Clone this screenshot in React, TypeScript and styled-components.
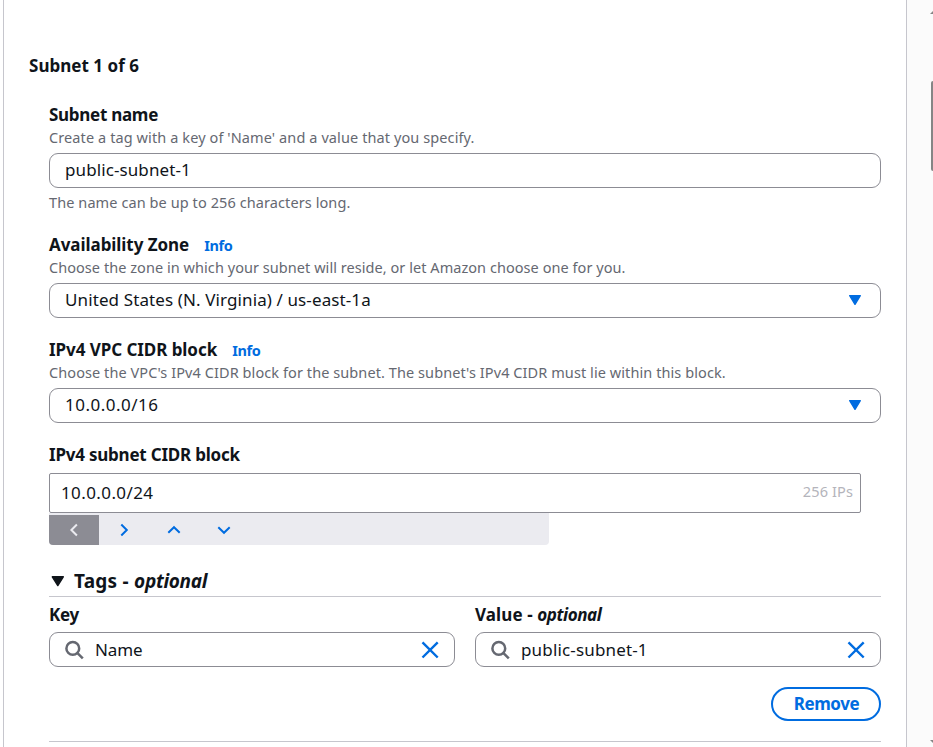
import React from "react";
import styled, { createGlobalStyle } from "styled-components";

const blue = "#006ce0";
const ink = "#0f141a";
const line = "#8c8c94";
const divider = "#c6c6cd";

const GlobalStyle = createGlobalStyle`
  * { box-sizing: border-box; }
  body {
    margin: 0;
    overflow: hidden;
    background: #fff;
    color: ${ink};
    font-family: "Noto Sans", "Open Sans", sans-serif;
  }
`;

const Page = styled.div`
  display: flex;
  height: 747px;
  padding-left: 3px;
  overflow: hidden;
`;

const Panel = styled.main`
  width: 904px;
  border: solid ${divider};
  border-width: 0 1px;
  padding: 55px 25px 0;
`;

const Rail = styled.aside`
  flex: 1;
  display: flex;
  flex-direction: column;
  align-items: flex-end;
  background: #fbfbfb;
`;

const ScrollArrow = styled.svg`
  display: block;
  width: 3px;
  height: 3px;
  margin-top: 11px;
`;

const ScrollArrowDown = styled(ScrollArrow)`
  margin-top: auto;
  margin-bottom: 4px;
`;

const ScrollThumb = styled.div`
  width: 2px;
  height: 90px;
  margin-top: 67px;
  border-radius: 2px 0 0 2px;
  background: #858585;
`;

const Text = styled.span<{ $track?: number }>`
  letter-spacing: ${(p) => p.$track ?? 0}px;
  white-space: nowrap;
`;

const Title = styled.h2`
  margin: 0;
  font-size: 17px;
  font-weight: 700;
  line-height: 22px;
`;

const Form = styled.div`
  margin: 27px 0 0 20px;
  width: 832px;
`;

const Field = styled.section`
  margin-bottom: 21px;
`;

const LabelRow = styled.div`
  display: flex;
  align-items: baseline;
  gap: 15px;
  height: 22px;
  font-size: 17px;
  font-weight: 700;
  line-height: 22px;
`;

const Optional = styled.em<{ $track: number }>`
  letter-spacing: ${(p) => p.$track}px;
`;

const Info = styled.a`
  color: ${blue};
  font-size: 14.5px;
  letter-spacing: -0.35px;
`;

const Description = styled.p`
  margin: 0;
  height: 27px;
  color: #656871;
  font-size: 14.5px;
  line-height: 22px;
`;

const Hint = styled.p`
  margin: 4px 0 0;
  padding-bottom: 1px;
  color: #656871;
  font-size: 14.5px;
  line-height: 20px;
`;

const Control = styled.div`
  display: flex;
  align-items: center;
  height: 35px;
  padding: 0 15px;
  border: 1px solid ${line};
  border-radius: 9px;
  font-size: 17px;
`;

const ControlText = styled(Text)`
  flex: 1;
  line-height: 31px;
  padding-bottom: 2px;
`;

const SearchText = styled(Text)`
  flex: 1;
  line-height: 33px;
`;

const CaretIcon = styled.svg`
  width: 20px;
  height: 20px;
  margin-bottom: 1px;
`;

const CidrInput = styled.div`
  display: flex;
  align-items: center;
  justify-content: space-between;
  width: 812px;
  height: 40px;
  margin-top: 7px;
  padding: 0 7px 2px 11px;
  border: 1px solid ${line};
  border-radius: 2px;
  font-size: 17px;
`;

const IpCount = styled.span`
  padding-bottom: 3px;
  color: #b4b4bb;
  font-size: 14.5px;
  letter-spacing: 0.12px;
`;

const Stepper = styled.div`
  display: flex;
  width: 500px;
  height: 30px;
  margin-top: 2px;
  border-radius: 0 0 4px 4px;
  background: #ebebf0;
  box-shadow: 0 -2px 0 #ebebf0;
  overflow: hidden;
`;

const StepButton = styled.button<{ $disabled?: boolean }>`
  display: flex;
  align-items: center;
  justify-content: center;
  width: 50px;
  height: 30px;
  padding: 0;
  border: 0;
  background: ${(p) => (p.$disabled ? line : "transparent")};
  color: ${(p) => (p.$disabled ? "#ebebf0" : blue)};
`;

const TagsHeader = styled.div`
  display: flex;
  align-items: center;
  height: 32px;
  margin-top: 20px;
  border-bottom: 1px solid ${divider};
  font-size: 19px;
  font-weight: 700;
  line-height: 30px;
`;

const TagsCaret = styled.svg`
  width: 14px;
  height: 12px;
  margin: 0 9px 0 2px;
`;

const TagGrid = styled.div`
  display: grid;
  grid-template-columns: 1fr 1fr;
  gap: 20px;
  margin-top: 6px;
`;

const TagLabel = styled.div`
  height: 29px;
  font-size: 17px;
  font-weight: 700;
  line-height: 23px;
`;

const SearchGlyph = styled.svg`
  width: 20px;
  height: 20px;
  margin-right: 10px;
`;

const ClearGlyph = styled.svg`
  width: 18px;
  height: 18px;
`;

const Actions = styled.div`
  display: flex;
  justify-content: flex-end;
  height: 75px;
  padding-top: 20px;
  border-bottom: 1px solid ${divider};
`;

const RemoveButton = styled.button`
  width: 110px;
  height: 34px;
  padding: 0 0 1px 1px;
  border: 2px solid ${blue};
  border-radius: 17px;
  background: #fff;
  color: ${blue};
  font: 700 17px "Noto Sans", sans-serif;
  letter-spacing: -0.45px;
`;

const Caret = () => (
  <CaretIcon viewBox="0 0 20 20">
    <path d="M4.7 5.6H15.3L10 14.3Z" fill={blue} stroke={blue} strokeWidth="1.4" strokeLinejoin="round" />
  </CaretIcon>
);

const Chevron = ({ d }: { d: string }) => (
  <svg width="16" height="16" viewBox="0 0 16 16" fill="none" stroke="currentColor" strokeWidth="2">
    <path d={d} />
  </svg>
);

const SearchControl = ({ text, track }: { text: string; track: number }) => (
  <Control>
    <SearchGlyph viewBox="0 0 20 20" fill="none" stroke="#656871" strokeWidth="2.5">
      <circle cx="7.8" cy="8.4" r="6.4" />
      <path d="M12.2 12.8L17.8 18.4" />
    </SearchGlyph>
    <SearchText $track={track}>{text}</SearchText>
    <ClearGlyph viewBox="0 0 18 18" fill="none" stroke={blue} strokeWidth="2.4">
      <path d="M1.5 1.3L16.7 16.5M16.7 1.3L1.5 16.5" />
    </ClearGlyph>
  </Control>
);

export default function App() {
  return (
    <>
      <GlobalStyle />
      <Page>
        <Panel>
          <Title><Text $track={0.03}>Subnet 1 of 6</Text></Title>
          <Form>
            <Field>
              <LabelRow><Text $track={-0.28}>Subnet name</Text></LabelRow>
              <Description><Text $track={0.1}>Create a tag with a key of 'Name' and a value that you specify.</Text></Description>
              <Control><ControlText $track={0.1}>public-subnet-1</ControlText></Control>
              <Hint><Text $track={0.09}>The name can be up to 256 characters long.</Text></Hint>
            </Field>
            <Field>
              <LabelRow><Text $track={-0.06}>Availability Zone</Text><Info>Info</Info></LabelRow>
              <Description><Text $track={0.05}>Choose the zone in which your subnet will reside, or let Amazon choose one for you.</Text></Description>
              <Control><ControlText $track={0.11}>United States (N. Virginia) / us-east-1a</ControlText><Caret /></Control>
            </Field>
            <Field>
              <LabelRow><Text $track={-0.06}>IPv4 VPC CIDR block</Text><Info>Info</Info></LabelRow>
              <Description><Text $track={0.08}>Choose the VPC's IPv4 CIDR block for the subnet. The subnet's IPv4 CIDR must lie within this block.</Text></Description>
              <Control><ControlText $track={0.5}>10.0.0.0/16</ControlText><Caret /></Control>
            </Field>
            <LabelRow><Text $track={-0.22}>IPv4 subnet CIDR block</Text></LabelRow>
            <CidrInput>
              <Text $track={0.4}>10.0.0.0/24</Text>
              <IpCount>256 IPs</IpCount>
            </CidrInput>
            <Stepper>
              <StepButton $disabled aria-label="Previous"><Chevron d="M10.9 2.5L5.4 8L10.9 13.5" /></StepButton>
              <StepButton aria-label="Next"><Chevron d="M5.3 2.5L10.8 8L5.3 13.5" /></StepButton>
              <StepButton aria-label="Increase"><Chevron d="M2.3 10.7L8 5.2L13.7 10.7" /></StepButton>
              <StepButton aria-label="Decrease"><Chevron d="M2.3 5.3L8 10.8L13.7 5.3" /></StepButton>
            </Stepper>
            <TagsHeader>
              <TagsCaret viewBox="0 0 14 12">
                <path d="M1.3 1.8H12.3L6.8 10.6Z" fill={ink} stroke={ink} strokeWidth="1.4" strokeLinejoin="round" />
              </TagsCaret>
              <Text $track={0.25}>Tags - <Optional $track={-0.3}>optional</Optional></Text>
            </TagsHeader>
            <TagGrid>
              <div>
                <TagLabel><Text $track={-0.25}>Key</Text></TagLabel>
                <SearchControl text="Name" track={-0.15} />
              </div>
              <div>
                <TagLabel><Text $track={0.1}>Value - <Optional $track={-0.42}>optional</Optional></Text></TagLabel>
                <SearchControl text="public-subnet-1" track={0.16} />
              </div>
            </TagGrid>
            <Actions><RemoveButton>Remove</RemoveButton></Actions>
          </Form>
        </Panel>
        <Rail>
          <ScrollArrow viewBox="0 0 3 3"><path d="M3 0V3H0Z" fill="#858585" /></ScrollArrow>
          <ScrollThumb />
          <ScrollArrowDown viewBox="0 0 3 3"><path d="M0 0H3V3Z" fill="#858585" /></ScrollArrowDown>
        </Rail>
      </Page>
    </>
  );
}
